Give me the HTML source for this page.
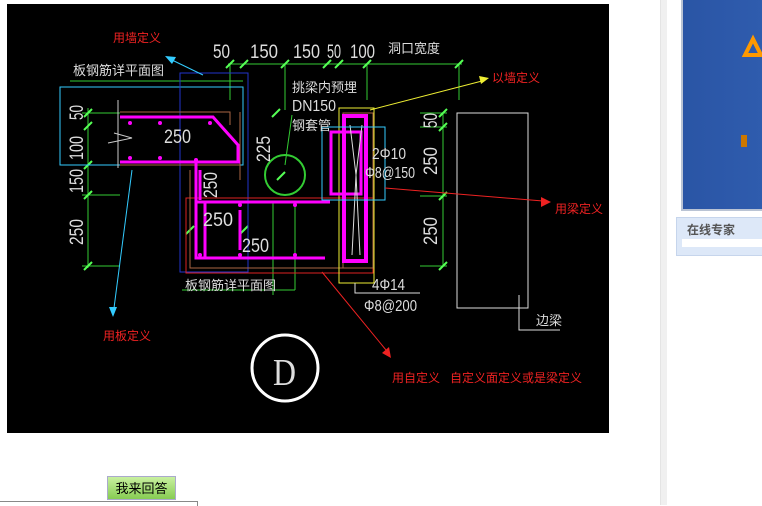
<!DOCTYPE html>
<html><head><meta charset="utf-8"><style>
body{margin:0;width:762px;height:505px;background:#fff;overflow:hidden;position:relative;font-family:"Liberation Sans","Noto Sans CJK SC",sans-serif}
.cad{position:absolute;left:7px;top:4px;width:602px;height:429px;background:#000}
.sep{position:absolute;left:660px;top:0;width:6px;height:505px;background:#f0f0f0;border-left:1px solid #e4e4e4}
.ad{position:absolute;left:681px;top:0;width:81px;height:209px;background:linear-gradient(90deg,#2a55a5,#2f5cae);border-left:2px solid #b9c3d4;border-bottom:2px solid #b9c3d4}
.exp{position:absolute;left:676px;top:217px;width:86px;height:37px;background:#dde8f8;border:1px solid #c6d5ec}
.exp span{position:absolute;left:10px;top:3px;font-size:12px;font-weight:bold;color:#555}
.exp i{position:absolute;left:5px;top:21px;right:0;height:8px;background:#fff}
.btn{position:absolute;left:107px;top:476px;width:69px;height:24px;background:linear-gradient(#c8f0a0,#86cc52);border:1px solid #aac;box-sizing:border-box;font-size:13px;text-align:center;line-height:23px;color:#000}
.ln{position:absolute;left:0;top:501px;width:197px;height:4px;border-top:1px solid #888;border-right:1px solid #888}
</style></head><body>
<div class="cad"></div>
<svg style="position:absolute;left:0;top:0" width="762" height="505" font-family="Liberation Sans,Noto Sans CJK SC,sans-serif">
<g fill="none" stroke-width="1">
<line x1="228" y1="64" x2="462" y2="64" stroke="#3c3"/>
<g stroke="#3c3"><line x1="230" y1="64" x2="230" y2="100"/><line x1="285" y1="64" x2="285" y2="110"/><line x1="367" y1="64" x2="367" y2="100"/><line x1="459" y1="64" x2="459" y2="100"/>
<line x1="88" y1="108" x2="88" y2="268"/><line x1="443" y1="112" x2="443" y2="266"/>
<line x1="82" y1="113" x2="120" y2="113"/><line x1="82" y1="165" x2="120" y2="165"/><line x1="82" y1="195" x2="120" y2="195"/><line x1="82" y1="266" x2="120" y2="266"/>
<line x1="420" y1="113" x2="447" y2="113"/><line x1="420" y1="127" x2="447" y2="127"/><line x1="420" y1="196" x2="447" y2="196"/><line x1="420" y1="266" x2="447" y2="266"/>
<line x1="70" y1="81" x2="243" y2="81"/><line x1="182" y1="290" x2="295" y2="290"/><line x1="295" y1="205" x2="295" y2="290"/><line x1="273" y1="201" x2="273" y2="295"/>
</g>
<g stroke="#5f5" stroke-width="2">
<path d="M226 68l8-8M240 68l8-8M281 68l8-8M323 68l8-8M335 68l8-8M363 68l8-8M455 68l8-8M84 117l8-8M84 130l8-8M84 169l8-8M84 199l8-8M84 270l8-8M439 117l8-8M439 131l8-8M439 200l8-8M439 270l8-8M272 117l8-8M277 180l8-8M186 234l8-8M240 234l8-8"/>
</g>
<rect x="60" y="87" width="183" height="78" stroke="#3cf"/>
<rect x="180" y="73" width="68" height="199" stroke="#23c"/>
<rect x="186" y="198" width="187" height="75" stroke="#d22"/>
<path d="M120 165L240 165M190 170L190 268L373 268M120 112L230 112L230 125M240 112L240 180" stroke="#a64"/>
<path d="M120 117L213 117L238 145L238 163M120 162L240 162M196 162L196 258L325 258M196 202L330 202M205 202L205 258M240 210L240 250M200 170L200 200" stroke="#f0f" stroke-width="3"/>
<g fill="#f0f"><circle cx="130" cy="123" r="2"/><circle cx="160" cy="123" r="2"/><circle cx="210" cy="123" r="2"/><circle cx="130" cy="158" r="2"/><circle cx="160" cy="158" r="2"/><circle cx="196" cy="160" r="2"/><circle cx="240" cy="205" r="2"/><circle cx="295" cy="205" r="2"/><circle cx="200" cy="255" r="2"/><circle cx="240" cy="255" r="2"/><circle cx="295" cy="255" r="2"/></g>
<path d="M108 143l24-5-18-5M118 100L118 168" stroke="#ccc"/>
<circle cx="285" cy="175" r="20" stroke="#3c3" stroke-width="2"/>
<line x1="292" y1="115" x2="285" y2="165" stroke="#3c3"/>
<rect x="339" y="108" width="35" height="175" stroke="#ee3"/>
<rect x="343" y="113" width="30" height="155" stroke="#a64"/>
<rect x="344" y="116" width="22" height="145" stroke="#f0f" stroke-width="4"/>
<rect x="331" y="132" width="30" height="62" stroke="#f0f" stroke-width="3"/>
<path d="M350 125L356 175L352 255M362 125L356 175L360 255" stroke="#ddd"/>
<rect x="322" y="127" width="63" height="73" stroke="#3cf"/>
<rect x="457" y="113" width="71" height="195" stroke="#ddd"/>
<path d="M519 295L519 330L560 330M355 283L355 293L420 293" stroke="#ddd"/>
<line x1="370" y1="110" x2="482" y2="81" stroke="#ee3"/><path d="M489 78l-10 -2 2 8z" fill="#ee3"/>
<line x1="385" y1="188" x2="543" y2="201" stroke="#e22"/><path d="M551 202l-10-5 0 10z" fill="#e22"/>
<line x1="322" y1="272" x2="386" y2="350" stroke="#e22"/><path d="M391 358l-2-11-7 6z" fill="#e22"/>
<line x1="203" y1="75" x2="172" y2="60" stroke="#3cf"/><path d="M165 56l11 1-4 7z" fill="#3cf"/>
<line x1="132" y1="170" x2="114" y2="308" stroke="#3cf"/><path d="M113 317l-4-10 8 0z" fill="#3cf"/>
<circle cx="285" cy="368" r="33" stroke="#fff" stroke-width="3"/>
</g>
<g fill="#ddd" font-size="19" lengthAdjust="spacingAndGlyphs">
<text x="213" y="58" textLength="17" lengthAdjust="spacingAndGlyphs">50</text><text x="250" y="58" textLength="28" lengthAdjust="spacingAndGlyphs">150</text><text x="293" y="58" textLength="27" lengthAdjust="spacingAndGlyphs">150</text><text x="327" y="58" textLength="14" lengthAdjust="spacingAndGlyphs">50</text><text x="350" y="58" textLength="25" lengthAdjust="spacingAndGlyphs">100</text>
<text x="164" y="143" textLength="27" lengthAdjust="spacingAndGlyphs">250</text><text x="203" y="226" textLength="30" lengthAdjust="spacingAndGlyphs">250</text><text x="242" y="252" textLength="27" lengthAdjust="spacingAndGlyphs">250</text>
<text x="292" y="111" font-size="16" textLength="44" lengthAdjust="spacingAndGlyphs">DN150</text>
<text x="372" y="159" font-size="16" textLength="34" lengthAdjust="spacingAndGlyphs">2Φ10</text><text x="365" y="178" font-size="16" textLength="50" lengthAdjust="spacingAndGlyphs">Φ8@150</text>
<text x="372" y="290" font-size="16" textLength="33" lengthAdjust="spacingAndGlyphs">4Φ14</text><text x="364" y="311" font-size="16" textLength="53" lengthAdjust="spacingAndGlyphs">Φ8@200</text>
<text transform="translate(83,120) rotate(-90)" textLength="15" lengthAdjust="spacingAndGlyphs">50</text><text transform="translate(83,160) rotate(-90)" textLength="24" lengthAdjust="spacingAndGlyphs">100</text><text transform="translate(83,193) rotate(-90)" textLength="24" lengthAdjust="spacingAndGlyphs">150</text><text transform="translate(83,245) rotate(-90)" textLength="26" lengthAdjust="spacingAndGlyphs">250</text>
<text transform="translate(270,162) rotate(-90)" textLength="26" lengthAdjust="spacingAndGlyphs">225</text><text transform="translate(217,198) rotate(-90)" textLength="26" lengthAdjust="spacingAndGlyphs">250</text>
<text transform="translate(437,128) rotate(-90)" textLength="15" lengthAdjust="spacingAndGlyphs">50</text><text transform="translate(437,175) rotate(-90)" textLength="28" lengthAdjust="spacingAndGlyphs">250</text><text transform="translate(437,245) rotate(-90)" textLength="28" lengthAdjust="spacingAndGlyphs">250</text>
<text x="273" y="385" font-size="38" font-family="Liberation Serif,serif" textLength="23" lengthAdjust="spacingAndGlyphs">D</text>
</g>
<g fill="#ddd" font-size="13">
<text x="388" y="53">洞口宽度</text><text x="73" y="75">板钢筋详平面图</text><text x="185" y="290">板钢筋详平面图</text>
<text x="292" y="92">挑梁内预埋</text><text x="292" y="130">钢套管</text><text x="536" y="325">边梁</text>
</g>
<g fill="#e22" font-size="12">
<text x="113" y="42">用墙定义</text><text x="492" y="82">以墙定义</text><text x="555" y="213">用梁定义</text><text x="103" y="340">用板定义</text><text x="392" y="382">用自定义 &#160; 自定义面定义或是梁定义</text>
</g>
</svg>
<div class="sep"></div>
<div class="ad"><svg width="81" height="209"><path d="M62 55l8-16 8 16z" fill="none" stroke="#f90" stroke-width="4"/><rect x="58" y="135" width="6" height="12" fill="#c70"/></svg></div>
<div class="exp"><span>在线专家</span><i></i></div>
<div class="btn">我来回答</div>
<div class="ln"></div>
</body></html>
